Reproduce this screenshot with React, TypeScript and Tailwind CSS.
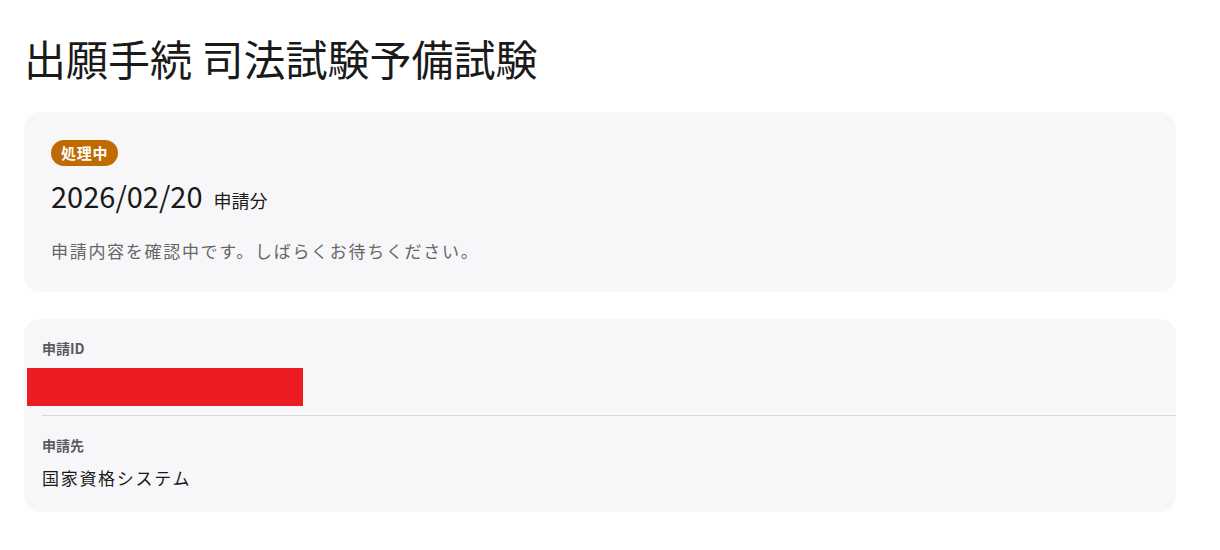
export default function App() {
  return (
    <div className="min-h-screen bg-white px-6 pt-[28px] font-['Noto_Sans_CJK_JP','Noto_Sans',sans-serif] text-[#1a1a1a]">
      <h1 className="text-[42px] leading-[60px] font-normal">出願手続 司法試験予備試験</h1>

      <div className="mt-6 w-[1152px] rounded-2xl bg-[#f7f7f9] px-[27px] pt-[28px] pb-[28px]">
        <span className="inline-flex h-[26px] items-center rounded-full bg-[#c06a02] px-[10px] text-[15px] font-bold tracking-[0.05em] text-white">
          処理中
        </span>
        <div className="mt-[11px] flex items-baseline gap-[11px] leading-[36px]">
          <span className="text-[29px]">2026/02/20</span>
          <span className="text-[18px]">申請分</span>
        </div>
        <p className="mt-[20px] text-[17px] leading-[26px] tracking-[0.1em] text-[#666]">
          申請内容を確認中です。しばらくお待ちください。
        </p>
      </div>

      <div className="mt-[27px] w-[1152px] rounded-2xl bg-[#f7f7f9]">
        <div className="pl-[18px] pt-[19px] pb-[9px]">
          <div className="text-[14px] leading-[20px] font-semibold text-[#5a5a5f]">申請ID</div>
          <div className="mt-[10px] ml-[-15px] h-[38px] w-[276px] bg-[#ed1c24]" />
        </div>
        <div className="ml-[18px] border-t border-[#d9d9dc] pt-[19px] pb-[22px]">
          <div className="text-[14px] leading-[20px] font-semibold text-[#5a5a5f]">申請先</div>
          <div className="mt-[11px] text-[17px] leading-[24px] tracking-[0.1em]">国家資格システム</div>
        </div>
      </div>
    </div>
  );
}
